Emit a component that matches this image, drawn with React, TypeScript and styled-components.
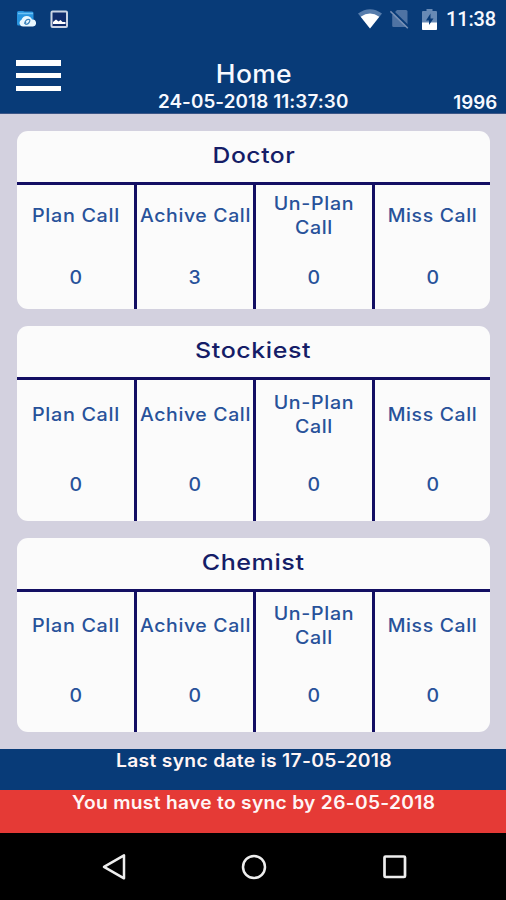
import React from "react";
import styled, { createGlobalStyle } from "styled-components";

const GlobalStyle = createGlobalStyle`
  * { box-sizing: border-box; }
  body { margin: 0; font-family: Inter, "Liberation Sans", sans-serif; }
`;

const Screen = styled.div`
  width: 506px;
  height: 900px;
  display: flex;
  flex-direction: column;
  overflow: hidden;
  background: #d3d1df;
`;

const Wide = styled.span<{ $scale: number }>`
  display: inline-block;
  transform: scaleX(${(p) => p.$scale});
`;

const Header = styled.header`
  height: 114px;
  flex: none;
  background: #083b78;
  border-bottom: 1px solid #3c5687;
  color: #f7f9ff;
`;

const StatusBar = styled.div`
  height: 38px;
  padding: 0 10px 0 16px;
  display: flex;
  justify-content: space-between;
`;

const StatusGroup = styled.div`
  display: flex;
  align-items: center;
`;

const Clock = styled.span`
  margin-left: 9px;
  width: 50px;
  font: 500 20px/38px Roboto, sans-serif;
  letter-spacing: -0.15px;
  white-space: nowrap;
`;

const TitleBar = styled.div`
  height: 75px;
  display: grid;
  grid-template-columns: 120px 1fr 120px;
`;

const MenuButton = styled.button`
  width: 45px;
  height: 31px;
  margin: 22px 0 0 16px;
  padding: 0;
  border: 0;
  background: none;
  display: flex;
  flex-direction: column;
  justify-content: space-between;
`;

const MenuLine = styled.span`
  display: block;
  width: 45px;
  height: 5.5px;
  background: #fff;
`;

const TitleColumn = styled.div`
  display: flex;
  flex-direction: column;
  align-items: center;
  padding: 21px 0 0 1px;
`;

const Title = styled.h1`
  margin: 0;
  font-size: 25px;
  font-weight: 500;
  line-height: 30px;
  letter-spacing: 0.3px;
`;

const Timestamp = styled.div`
  font-size: 18px;
  font-weight: 600;
  line-height: 25px;
  letter-spacing: 0.1px;
  white-space: nowrap;
`;

const UserId = styled(Timestamp)`
  align-self: end;
  justify-self: end;
  padding-right: 9px;
  line-height: 23px;
`;

const Content = styled.main`
  flex: 1;
  padding: 17px 16px 17px 17px;
  display: flex;
  flex-direction: column;
  gap: 17px;
`;

const Card = styled.section<{ $height: number }>`
  height: ${(p) => p.$height}px;
  display: flex;
  flex-direction: column;
  border-radius: 11px;
  overflow: hidden;
  background: #fbfbfb;
`;

const CardTitle = styled.h2`
  margin: 0;
  height: 54px;
  flex: none;
  border-bottom: 3px solid #130f63;
  color: #151d67;
  font-size: 22px;
  font-weight: 500;
  line-height: 49px;
  letter-spacing: 0.5px;
  text-align: center;
`;

const Columns = styled.div`
  flex: 1;
  display: grid;
  grid-template-columns: 120px 119px 119px 115px;
`;

const Cell = styled.div`
  display: flex;
  flex-direction: column;
  color: #28529a;
  font-size: 18px;
  font-weight: 450;
  text-align: center;
  &:not(:last-child) {
    border-right: 3px solid #130f63;
  }
`;

const Label = styled.div<{ $height: number }>`
  height: ${(p) => p.$height}px;
  display: flex;
  align-items: center;
  justify-content: center;
  line-height: 24px;
  letter-spacing: 0.6px;
  white-space: pre;
`;

const Value = styled.div<{ $offset: number }>`
  margin-top: ${(p) => p.$offset}px;
  line-height: 24px;
`;

const Notice = styled.div<{ $alert?: boolean }>`
  height: ${(p) => (p.$alert ? 43 : 41)}px;
  flex: none;
  padding-left: 2px;
  background: ${(p) => (p.$alert ? "#e53a36" : "#083b78")};
  color: #fff5f5;
  font-size: 18px;
  font-weight: 600;
  line-height: ${(p) => (p.$alert ? 25 : 23)}px;
  letter-spacing: 0.3px;
  text-align: center;
  white-space: nowrap;
`;

const NavBar = styled.nav`
  height: 67px;
  flex: none;
  padding-left: 3px;
  background: #000;
  display: flex;
  justify-content: center;
  align-items: center;
  gap: 111px;
`;

const FileIcon = () => (
  <svg width="20" height="18" viewBox="0 0 20 18">
    <path d="M1 2.5Q1 1 2.5 1H7l1.500 .5H16q1.500 0 1.500 1.500V14q0 1.500-1.500 1.500H2.500Q1 15.500 1 14Z" fill="#2794df" />
    <path d="M2 3.500h15" stroke="#6cc2f5" strokeWidth="1.500" />
    <path d="M7 16.500a3.600 3.600 0 0 1-1.500-6.800 5.600 5.600 0 0 1 10.500-.2 3.500 3.500 0 0 1 1 7Z" fill="#e9f7ff" />
    <path d="M8.500 13.800q1-4.500 4-4.500 2 0 1 2.500-1 2.500-3.500 2.500-1.500-.5 0-2.500" fill="none" stroke="#3c83bd" strokeWidth="1.200" />
  </svg>
);

const PictureIcon = () => (
  <svg width="19" height="19" viewBox="0 0 19 19">
    <rect x="1.500" y="1.500" width="15.500" height="15.500" rx="1" fill="#102c6b" stroke="#cbd3e3" strokeWidth="2" />
    <path d="M3 14v-2l3-2.500 2.500 2 2-1.500 2 2h3v2Z" fill="#fff" />
  </svg>
);

const WifiIcon = () => (
  <svg width="24" height="20" viewBox="0 0 24 20">
    <path d="M0 4.500Q12-4 24 4.500L12 19.500Z" fill="#587dac" />
    <path d="M2.700 7.700Q12 1.500 21.300 7.700L12 19.500Z" fill="#fff" />
  </svg>
);

const NoSimIcon = () => (
  <svg width="20" height="20" viewBox="0 0 20 20">
    <path d="M7 1h9q1.500 0 1.500 1.500V18H3.500q-1.300 0-1.300-1.500V6Z" fill="#4f73a3" />
    <path d="M1.800 1.300 19.200 18.200" stroke="#083b78" strokeWidth="2" />
    <path d="M.4 2.300 17.800 19.200" stroke="#7890b5" strokeWidth="1.500" />
  </svg>
);

const BatteryIcon = () => (
  <svg width="15" height="21" viewBox="0 0 15 21">
    <path d="M4.500 0h6v2H14a1 1 0 0 1 1 1v17a1 1 0 0 1-1 1H1a1 1 0 0 1-1-1V3a1 1 0 0 1 1-1h3.500Z" fill="#688ab5" />
    <path d="M0 13.500h15V20a1 1 0 0 1-1 1H1a1 1 0 0 1-1-1Z" fill="#fff" />
    <path d="M8.500 4.500 4 11.500h3V16l4.500-6.500h-3Z" fill="#083b78" />
  </svg>
);

const IconSlot = styled.span<{ $gap?: number }>`
  display: flex;
  margin-left: ${(p) => p.$gap ?? 0}px;
`;

const BackIcon = () => (
  <svg width="28" height="30" viewBox="0 0 28 30">
    <path d="M24 3.300v23L4 14.800Z" fill="none" stroke="#eee" strokeWidth="2.500" strokeLinejoin="round" />
  </svg>
);

const HomeIcon = () => (
  <svg width="30" height="30" viewBox="0 0 30 30">
    <circle cx="15" cy="15" r="11" fill="none" stroke="#eee" strokeWidth="2.500" />
  </svg>
);

const RecentIcon = () => (
  <svg width="30" height="30" viewBox="0 0 30 30">
    <rect x="4.500" y="4.500" width="20.500" height="20.500" rx="1" fill="none" stroke="#eee" strokeWidth="2.700" />
  </svg>
);

const labels = [
  { text: "Plan Call", scale: 1.1 },
  { text: "Achive Call", scale: 1.08 },
  { text: "Un-Plan\nCall", scale: 1.09 },
  { text: "Miss Call", scale: 1.08 },
];

const groups = [
  { name: "Doctor", scale: 1.12, height: 178, labelHeight: 61, offset: 20, values: [0, 3, 0, 0] },
  { name: "Stockiest", scale: 1.135, height: 195, labelHeight: 69, offset: 24, values: [0, 0, 0, 0] },
  { name: "Chemist", scale: 1.14, height: 194, labelHeight: 67, offset: 25, values: [0, 0, 0, 0] },
];

export default function App() {
  return (
    <Screen>
      <GlobalStyle />
      <Header>
        <StatusBar>
          <StatusGroup>
            <IconSlot><FileIcon /></IconSlot>
            <IconSlot $gap={14}><PictureIcon /></IconSlot>
          </StatusGroup>
          <StatusGroup>
            <WifiIcon />
            <IconSlot $gap={8}><NoSimIcon /></IconSlot>
            <IconSlot $gap={12}><BatteryIcon /></IconSlot>
            <Clock>11:38</Clock>
          </StatusGroup>
        </StatusBar>
        <TitleBar>
          <MenuButton aria-label="Menu">
            <MenuLine />
            <MenuLine />
            <MenuLine />
          </MenuButton>
          <TitleColumn>
            <Title><Wide $scale={1.06}>Home</Wide></Title>
            <Timestamp><Wide $scale={1.045}>24-05-2018 11:37:30</Wide></Timestamp>
          </TitleColumn>
          <UserId><Wide $scale={1.04}>1996</Wide></UserId>
        </TitleBar>
      </Header>
      <Content>
        {groups.map((group) => (
          <Card key={group.name} $height={group.height}>
            <CardTitle><Wide $scale={group.scale}>{group.name}</Wide></CardTitle>
            <Columns>
              {labels.map((label, i) => (
                <Cell key={label.text}>
                  <Label $height={group.labelHeight}><Wide $scale={label.scale}>{label.text}</Wide></Label>
                  <Value $offset={group.offset}><Wide $scale={1.08}>{group.values[i]}</Wide></Value>
                </Cell>
              ))}
            </Columns>
          </Card>
        ))}
      </Content>
      <Notice><Wide $scale={1.07}>Last sync date is 17-05-2018</Wide></Notice>
      <Notice $alert><Wide $scale={1.065}>You must have to sync by 26-05-2018</Wide></Notice>
      <NavBar>
        <BackIcon />
        <HomeIcon />
        <RecentIcon />
      </NavBar>
    </Screen>
  );
}
